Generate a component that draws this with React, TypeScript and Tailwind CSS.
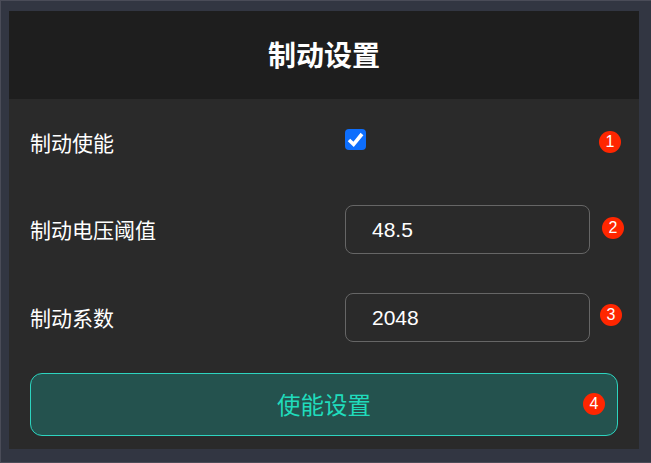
const cjk = "font-['Liberation_Sans','Noto_Sans_CJK_SC',sans-serif]";

const Badge = ({ n, className }: { n: number; className: string }) => {
  return (
    <span className={`absolute flex h-[22px] w-[22px] items-center justify-center rounded-full bg-[#ff2600] text-[16px] leading-none text-white ${className}`}>
      {n}
    </span>
  );
};

const Row = ({ label, value }: { label: string; value: string }) => {
  return (
    <div className="flex h-[88px] items-center pl-[21px]">
      <div className="mt-[3px] w-[315px] text-[21px] text-white">{label}</div>
      <input
        readOnly
        value={value}
        className="h-[49px] w-[245px] rounded-[8px] border border-[#666666] bg-transparent pt-[2px] pl-[26px] text-[21px] text-white outline-none"
      />
    </div>
  );
};

const App = () => {
  return (
    <div className={`relative h-[463px] w-[651px] overflow-hidden border-y border-l border-[#4a4c58] bg-[#323642] pt-[10px] pl-[8px] ${cjk}`}>
      <div className="h-[438px] w-[630px] bg-[#2a2a2a]">
        <div className="flex h-[88px] items-center justify-center bg-[#1e1e1e] pt-[4px] text-[28px] font-bold text-white">
          制动设置
        </div>
        <div className="flex h-[86px] items-center pl-[21px]">
          <div className="mt-[3px] w-[315px] text-[21px] text-white">制动使能</div>
          <div className="relative mb-[6px] h-[21px] w-[21px]">
            <input type="checkbox" defaultChecked className="m-0 block h-[21px] w-[21px] appearance-none rounded-[4px] bg-[#0d6efd]" />
            <svg viewBox="0 0 21 21" className="pointer-events-none absolute inset-0 h-[21px] w-[21px]">
              <path d="M4 11 L8.6 15.4 L17 5" fill="none" stroke="white" strokeWidth="3.6" />
            </svg>
          </div>
        </div>
        <Row label="制动电压阈值" value="48.5" />
        <Row label="制动系数" value="2048" />
        <div className="px-[21px] pt-[12px]">
          <button className="flex h-[63px] w-full items-center justify-center rounded-[12px] border border-[#2dd4bf] bg-[#24524e] pt-[4px] text-[23.5px] text-[#20dcbc]">
            使能设置
          </button>
        </div>
      </div>
      <Badge n={1} className="left-[598px] top-[130px]" />
      <Badge n={2} className="left-[601px] top-[216px]" />
      <Badge n={3} className="left-[599px] top-[303px]" />
      <Badge n={4} className="left-[582px] top-[392px]" />
    </div>
  );
};

export default App;
